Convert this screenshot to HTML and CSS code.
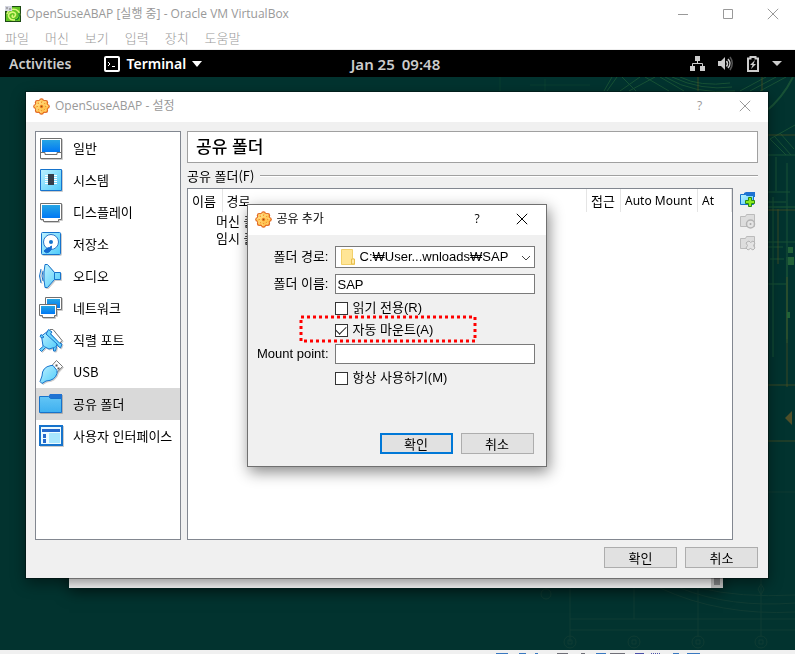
FILE: index.html
```html
<!DOCTYPE html>
<html lang="ko">
<head>
<meta charset="utf-8">
<title>OpenSuseABAP - Oracle VM VirtualBox</title>
<link rel="stylesheet" href="styles.css">
</head>
<body>
<svg width="0" height="0" class="defs" aria-hidden="true">
  <defs>
    <linearGradient id="screen" x1="0" y1="0" x2="0" y2="1"><stop offset="0" stop-color="#26a5e4"/><stop offset="1" stop-color="#0078f5"/></linearGradient>
    <linearGradient id="sky" x1="0" y1="0" x2="1" y2="1"><stop offset="0" stop-color="#bdf1ff"/><stop offset="1" stop-color="#4ecbfa"/></linearGradient>
    <linearGradient id="folder" x1="0" y1="0" x2="0" y2="1"><stop offset="0" stop-color="#63c5f5"/><stop offset="1" stop-color="#3eb0f0"/></linearGradient>
    <linearGradient id="orange" x1="0" y1="0" x2="1" y2="1"><stop offset="0" stop-color="#ffe896"/><stop offset="1" stop-color="#ffb02e"/></linearGradient>
    <symbol id="gear" viewBox="0 0 16 16">
      <g fill="#e2641c"><circle cx="8" cy="8" r="6.500"/><circle cx="8" cy="2.400" r="2.200"/><circle cx="12" cy="4" r="2.200"/><circle cx="13.600" cy="8" r="2.200"/><circle cx="12" cy="12" r="2.200"/><circle cx="8" cy="13.600" r="2.200"/><circle cx="4" cy="12" r="2.200"/><circle cx="2.400" cy="8" r="2.200"/><circle cx="4" cy="4" r="2.200"/></g>
      <g fill="url(#orange)"><circle cx="8" cy="8" r="5.800"/><circle cx="8" cy="2.600" r="1.300"/><circle cx="11.800" cy="4.200" r="1.300"/><circle cx="13.400" cy="8" r="1.300"/><circle cx="11.800" cy="11.800" r="1.300"/><circle cx="8" cy="13.400" r="1.300"/><circle cx="4.200" cy="11.800" r="1.300"/><circle cx="2.600" cy="8" r="1.300"/><circle cx="4.200" cy="4.200" r="1.300"/></g>
      <circle cx="8" cy="8" r="1.600" fill="#f0801c"/><circle cx="8" cy="8" r=".7" fill="#8a4a1c"/>
      <path d="M8 3.500v1M8 11.500v1M3.500 8h1M11.500 8h1M4.800 4.800l.6.600M10.600 10.600l.6.600M11.200 4.800l-.6.600M4.800 11.200l.6-.6" stroke="#ee8424"/>
    </symbol>
    <symbol id="close" viewBox="0 0 12 12"><path d="M.8.800 11.200 11.200M11.200.8.800 11.200" fill="none" stroke="currentColor"/></symbol>
  </defs>
</svg>

<header class="app-title">
  <svg width="16" height="16" viewBox="0 0 16 16" aria-hidden="true">
    <rect width="16" height="16" fill="#1d4a14"/>
    <path d="M5 1h10v14H1V8z" fill="#62c422"/>
    <path d="M2 8C3 3 10 2 13 5s1 9-4 9-7-5-4-7 7 0 5 3-4 0-2-1" fill="none" stroke="#d8f77a" stroke-width="1.600"/>
    <path d="M10 14c3 0 5-3 4-7" fill="none" stroke="#168a20" stroke-width="1.500"/>
    <rect width="7" height="5" fill="#d4d6e0"/><path d="M1 2h2M4 3h2" stroke="#777"/>
  </svg>
  <span>OpenSuseABAP [실행 중] - Oracle VM VirtualBox</span>
  <div class="window-controls">
    <button type="button" aria-label="최소화"><svg width="12" height="12" viewBox="0 0 12 12"><path d="M1 6.500h10" stroke="currentColor"/></svg></button>
    <button type="button" aria-label="최대화"><svg width="12" height="12" viewBox="0 0 12 12"><path d="M1.500 1.500h9v9h-9z" fill="none" stroke="currentColor"/></svg></button>
    <button type="button" aria-label="닫기"><svg width="12" height="12"><use href="#close"/></svg></button>
  </div>
</header>
<nav class="app-menu">
  <a href="#">파일</a><a href="#">머신</a><a href="#">보기</a><a href="#">입력</a><a href="#">장치</a><a href="#">도움말</a>
</nav>

<div class="shell-bar">
  <div class="shell-left">
    <span>Activities</span>
    <span class="shell-app">
      <svg width="16" height="16" viewBox="0 0 16 16" aria-hidden="true"><rect x="1" y="1" width="14" height="14" rx="1" fill="none" stroke="#fff" stroke-width="2"/><path d="M4 6l2 2-2 2M8 10.500h3" fill="none" stroke="#fff"/></svg>
      Terminal
      <svg width="10" height="6" viewBox="0 0 10 6" aria-hidden="true"><path d="M0 0h10L5 6z" fill="#fff"/></svg>
    </span>
  </div>
  <div class="shell-clock"><span>Jan 25</span><span>09:48</span></div>
  <div class="shell-right">
    <svg width="15" height="16" viewBox="0 0 15 16" fill="#ccc" aria-hidden="true"><path d="M5 0h5v5H5zM0 10h5v5H0zM10 10h5v5h-5z"/><path d="M7.500 5v3M2.500 10V7.500h10V10" fill="none" stroke="#ccc"/></svg>
    <svg width="16" height="16" viewBox="0 0 16 16" aria-hidden="true"><path d="M0 5h3l4-4v13l-4-4H0z" fill="#ccc"/><path d="M8.500 5q2 2.500 0 5.500M10 3q4 4.500 0 9" fill="none" stroke="#ccc" stroke-width="1.500"/><path d="M12 1q4.500 6 0 13" fill="none" stroke="#555" stroke-width="1.500"/></svg>
    <svg width="12" height="16" viewBox="0 0 12 16" aria-hidden="true"><path d="M1 2.500h2.500V1h5v1.500H11V15H1z" fill="none" stroke="#ccc" stroke-width="2"/><path d="M8 4 3 9h2.500L4 13l5-5H6.500z" fill="#ccc"/></svg>
    <svg width="10" height="6" viewBox="0 0 10 6" aria-hidden="true"><path d="M0 0h10L5 5z" fill="#ccc"/></svg>
  </div>
</div>

<main class="desktop">
  <svg class="wallpaper" viewBox="0 0 795 573" preserveAspectRatio="none" aria-hidden="true">
    <g fill="none" stroke="#2b6b3c" opacity=".55">
      <path d="M612 0l-8 14M617 0l-10 14M622 0l14 14M640 0l-20 14M645 0l24 14M655 0l-26 14M660 0l24 14M665 0q30 18 70 14M672 0q30 14 60 10M680 0q20 10 50 6M740 14l26-14M750 14l26-14M760 14l26-14"/>
      <path d="M530 8h60M545 2v12M500 0v14" opacity=".4"/>
      <path d="M765 35Q782 22 793 0" stroke-width="2"/>
      <path d="M770 62l25-14M770 62l16 16M775 60l16 18M780 56l14 16M768 78h27M776 80v34M768 115h22M768 125h18M787 86v180M768 165h27M768 170h15M770 182h14M773 120v160M768 207h18"/>
      <path d="M787 180v82M768 130h27" stroke-width="2" opacity=".6"/>
    </g>
    <g fill="none" stroke="#56531f" opacity=".65"><path d="M698 0v14M762 0v14M768 58h27M768 133h27M787 200v110M768 308h27M768 364h27M778 132v55"/></g>
    <path d="M788 170h5v6h-5zM788 180h6v8h-6zM787 235h3v6h-3z" fill="#226238"/>
    <path d="M785 341l7-7v14z" fill="#4f4f28"/>
    <g fill="none" stroke="#25493a" opacity=".4">
      <path d="M570 510v55M634 510v32M698 505v55M761 500v60M570 542h225M570 553h225M660 511q60 28 135 24M680 511q50 20 115 15M768 415h27M700 511q40 10 95 7"/>
      <circle cx="546" cy="517" r="5"/><circle cx="570" cy="565" r="6"/><circle cx="634" cy="565" r="6"/><circle cx="698" cy="565" r="6"/><circle cx="761" cy="565" r="6"/><path d="M568 563h4v4h-4zM632 563h4v4h-4zM696 563h4v4h-4zM759 563h4v4h-4zM758 512l3-5 3 5-3 6z"/>
    </g>
  </svg>
  <div class="terminal"><span class="scroll"></span></div>

  <section class="window settings" aria-label="OpenSuseABAP - 설정">
    <header class="title-bar inactive">
      <svg width="17" height="17" aria-hidden="true"><use href="#gear"/></svg>
      <h1>OpenSuseABAP - 설정</h1>
      <button type="button" aria-label="도움말">?</button>
      <button type="button" aria-label="닫기"><svg width="12" height="12"><use href="#close"/></svg></button>
    </header>
    <div class="settings-body">
      <nav class="categories">
        <a href="#"><svg viewBox="0 0 24 24"><path d="M1.500 2.500h21v20h-21z" fill="#fff" stroke="#707070"/><path d="M3 4h18v12H3z" fill="url(#screen)"/><path d="M2 16.500h4v2h12v-2h4" fill="none" stroke="#707070"/></svg>일반</a>
        <a href="#"><svg viewBox="0 0 24 24"><path d="M1.500 1.500h21v21h-21z" fill="url(#sky)" stroke="#1673cc"/><path d="M6 7.500h12M6 9.500h12M6 11.500h12M6 13.500h12M6 15.500h12" stroke="#fff"/><path d="M9 6h6v11H9z" fill="#343d49"/></svg>시스템</a>
        <a href="#"><svg viewBox="0 0 24 24"><path d="M1.500 3.500h21v16h-3v2h-15v-2h-3z" fill="#fff" stroke="#707070"/><path d="M3 5h18v13H3z" fill="url(#screen)"/></svg>디스플레이</a>
        <a href="#"><svg viewBox="0 0 24 24"><rect x="2.500" y=".5" width="19" height="22" rx="1" fill="url(#sky)" stroke="#1673cc"/><circle cx="12" cy="10" r="7.500" fill="#fff" stroke="#2b76c9"/><circle cx="12" cy="10" r="2" fill="#1673cc"/><path d="M12.500 14q-2 2-4 2L5 19q2 3 5 1 3-2 2.500-6" fill="#146bd0" stroke="#146bd0"/></svg>저장소</a>
        <a href="#"><svg viewBox="0 0 24 24"><path d="M6 .5h2.500l7 8h6v7h-6l-7 8H6L5 16V8z" fill="url(#sky)" stroke="#1673cc"/><path d="M15.500 8.500v7" stroke="#1673cc"/><path d="M4 7q-2 5 0 10M2 5q-3 7 0 14" fill="none" stroke="#1673cc"/></svg>오디오</a>
        <a href="#"><svg viewBox="0 0 24 24"><path d="M6.500 1.500h16v12h-16z" fill="#fff" stroke="#707070"/><path d="M8 3h13v9H8z" fill="url(#screen)"/><path d="M.5 8.500h17v11h-2v2h-12v-2h-3z" fill="#fff" stroke="#707070"/><path d="M2 10h14v8H2z" fill="url(#screen)"/></svg>네트워크</a>
        <a href="#"><svg viewBox="0 0 24 24"><path d="M11 1.500h3l9 11-3 4L9 4z" fill="#fff" stroke="#777"/><path d="M2.500 8 9 3l10 11-2 5-7 2-6-3z" fill="url(#sky)" stroke="#1673cc"/><path d="M9.500 1.500 13 4l-1.500 2 9 9 2.500 1-1.500 4-2.500-2-1-2-11-10z" fill="#6cd4fb" stroke="#1673cc"/><path d="M1 8.500l2 1.500 2-1-3-2.500zM4.500 18 .5 21.500l2 2 4-4M14.500 20v3h2l1-4" fill="#6cd4fb" stroke="#1673cc"/></svg>직렬 포트</a>
        <a href="#"><svg viewBox="0 0 24 24"><path d="M12 6.500 17.500.5l6 6-6 6.500z" fill="#fff" stroke="#777"/><path d="M16.500 4.500h2v2h-2zM18.500 7.500h2v2h-2z" fill="#555"/><path d="M3 16q0-9 9-10.500h2l4 5v3q-2 7-11 7.500L3 23.500l-2-2z" fill="url(#sky)" stroke="#1673cc"/></svg>USB</a>
        <a href="#" class="selected" aria-current="page"><svg viewBox="0 0 24 24"><path d="M9 5l2-3h12v6H9z" fill="#1f72d2"/><path d="M.5 4.500h9l2 2h11v14H.5z" fill="url(#folder)" stroke="#1673cc"/></svg>공유 폴더</a>
        <a href="#"><svg viewBox="0 0 24 24"><path d="M1 2h22v19H1z" fill="#edfbff" stroke="#1673cc" stroke-width="2"/><path d="M3 5h18v3H3zM4 10h3v4H4zM4 15h3v4H4z" fill="#2468cc"/><path d="M10 9h11v10H10z" fill="#a9e6fd"/></svg>사용자 인터페이스</a>
      </nav>
      <div class="page">
        <h2>공유 폴더</h2>
        <div class="group-title"><span>공유 폴더(F)</span></div>
        <div class="folders">
          <div class="table-box">
            <table>
              <colgroup><col class="c-name"><col><col class="c-access"><col class="c-auto"><col class="c-at"></colgroup>
              <thead><tr><th>이름</th><th>경로</th><th>접근</th><th>Auto Mount</th><th>At</th></tr></thead>
              <tbody><tr><td colspan="5">머신 폴더</td></tr><tr><td colspan="5">임시 폴더</td></tr></tbody>
            </table>
          </div>
          <div class="tools">
            <button type="button" aria-label="추가"><svg viewBox="0 0 17 17"><path d="M5 2l2-1h9v5H5z" fill="#1f72d2"/><path d="M1.500 3.500h5l1 1h7v9h-13z" fill="url(#sky)" stroke="#1673cc"/><path d="M9.500 6.500h3v3h3v3h-3v3h-3v-3h-3v-3h3z" fill="#8bea1e" stroke="#2c8a12"/></svg></button>
            <button type="button" aria-label="편집" disabled><svg viewBox="0 0 17 17"><path d="M1.500 3.500h5l1-2h8v12h-14z" fill="#ddd" stroke="#bbb"/><circle cx="11.500" cy="11" r="4" fill="#e4e4e4" stroke="#b4b4b4" stroke-width="1.500"/><circle cx="11.500" cy="11" r="1" fill="#aaa"/></svg></button>
            <button type="button" aria-label="제거" disabled><svg viewBox="0 0 17 17"><path d="M1.500 3.500h5l1-2h8v12h-14z" fill="#ddd" stroke="#bbb"/><path d="M8 7l2-1 1.500 1.500L14 6l2 2-1.500 2.500L16 13l-2 2-2.500-1.500L9 15l-2-2 1.500-2.500L7 8z" fill="#e4e4e4" stroke="#b4b4b4"/></svg></button>
          </div>
        </div>
      </div>
    </div>
    <footer class="actions"><button type="button">확인</button><button type="button">취소</button></footer>
  </section>

  <section class="window add-share" role="dialog" aria-label="공유 추가">
    <header class="title-bar">
      <svg width="17" height="17" aria-hidden="true"><use href="#gear"/></svg>
      <h1>공유 추가</h1>
      <button type="button" aria-label="도움말">?</button>
      <button type="button" aria-label="닫기"><svg width="12" height="12"><use href="#close"/></svg></button>
    </header>
    <form>
      <label class="field" for="path">폴더 경로:</label>
      <div class="combo">
        <select id="path"><option>C:₩User...wnloads₩SAP</option></select>
        <svg class="combo-folder" width="14" height="16" viewBox="0 0 14 16" aria-hidden="true"><path d="M.5.500h11v9l2 1v5H.5z" fill="#ffe596" stroke="#f2d06b"/><path d="M10.500 15v-5h3v5z" fill="#ffe9a8" stroke="#e8bf4d"/></svg>
        <svg class="combo-arrow" width="10" height="6" viewBox="0 0 10 6" aria-hidden="true"><path d="M1 1l4 4 4-4" fill="none" stroke="#444"/></svg>
      </div>
      <label class="field" for="name">폴더 이름:</label>
      <input type="text" id="name" value="SAP">
      <label class="check"><input type="checkbox">읽기 전용(R)</label>
      <label class="check marked"><input type="checkbox" checked>자동 마운트(A)
        <svg class="marker" aria-hidden="true"><rect x="2" y="2" width="174" height="24" fill="none" stroke="red" stroke-width="3" stroke-dasharray="3 3"/></svg>
      </label>
      <label class="field" for="mount">Mount point:</label>
      <input type="text" id="mount">
      <label class="check"><input type="checkbox">항상 사용하기(M)</label>
    </form>
    <footer class="actions"><button type="button" class="default">확인</button><button type="button">취소</button></footer>
  </section>
</main>
<footer class="status-bar">
  <svg width="210" height="1" viewBox="0 0 210 1" aria-hidden="true"><path d="M1 .5h12M24 .5h7M40 .5h3M101 .5h10M178 .5h6M192 .5h13" stroke="#3978c0"/><path d="M62 .5h11M86 .5h4M115 .5h15" stroke="#707078"/><path d="M140 .5h9" stroke="#4a50a8"/><path d="M156 .5h10" stroke="#4a50a8" stroke-dasharray="1 1"/></svg>
</footer>
</body>
</html>
```
FILE: styles.css
```css
*, ::before, ::after { box-sizing: border-box; }
html, body { height: 100%; }
body {
  margin: 0;
  display: flex;
  flex-direction: column;
  overflow: hidden;
  background: #fff;
  color: #000;
  font: 13px/16px "Noto Sans CJK KR", sans-serif;
}
svg { flex: none; display: block; }
.defs { position: absolute; }
h1, h2 { margin: 0; font-weight: 400; }
a { color: inherit; text-decoration: none; }
button, input, select { font: inherit; color: inherit; margin: 0; padding: 0; }

.app-title {
  display: flex;
  align-items: center;
  gap: 5px;
  height: 27px;
  padding-left: 5px;
  color: #999;
  font-family: "Open Sans", "Noto Sans CJK KR", sans-serif;
  font-size: 12px;
}
.window-controls { display: flex; margin-left: auto; }
.window-controls button {
  width: 45px;
  display: grid;
  place-items: center;
  border: 0;
  background: none;
}
.app-menu {
  display: flex;
  align-items: center;
  gap: 16px;
  height: 23px;
  padding-left: 5px;
  color: #999;
  font-weight: 300;
  border-bottom: 1px solid #eee;
}

.shell-bar {
  display: grid;
  grid-template-columns: 1fr auto 1fr;
  align-items: center;
  height: 27px;
  padding: 0 13px 0 9px;
  background: #000;
  color: #ccc;
  font: 600 14px/20px "Noto Sans", sans-serif;
}
.shell-left { display: flex; gap: 33px; }
.shell-app { display: flex; align-items: center; gap: 6px; color: #fff; }
.shell-clock { display: flex; gap: 7px; font-size: 15px; }
.shell-right { display: flex; align-items: center; justify-content: flex-end; gap: 13px; }

.desktop { position: relative; flex: 1; background: #02332f; overflow: hidden; }
.wallpaper { position: absolute; width: 100%; height: 100%; }
.status-bar { height: 4px; display: flex; align-items: flex-end; background: #f0f0f0; padding-left: 495px; }

.terminal {
  position: absolute;
  left: 69px;
  right: 72px;
  top: 60px;
  bottom: 62px;
  display: flex;
  align-items: flex-end;
  justify-content: flex-end;
  background: #fff;
  box-shadow: 0 4px 14px #0008;
}
.scroll {
  width: 12px;
  height: 12px;
  background: #888a8c;
  border: solid #ccc;
  border-width: 0 3px 3px;
}

.window { position: absolute; display: flex; flex-direction: column; background: #f0f0f0; }
.settings { left: 26px; right: 27px; top: 15px; bottom: 72px; box-shadow: 0 0 0 1px #0005, 0 5px 14px #0007; }
.add-share {
  left: calc(50% - 151px);
  top: 127px;
  width: 300px;
  height: 263px;
  border: 1px solid #707070;
  box-shadow: 2px 5px 14px #0007;
}
.title-bar {
  display: flex;
  align-items: center;
  height: 30px;
  padding: 0 1px 2px 7px;
  background: #fff;
  font: 12px/16px "Open Sans", "Noto Sans CJK KR", sans-serif;
}
.inactive { color: #999; }
.title-bar h1 { flex: 1; padding-left: 5px; font: inherit; }
.title-bar button { width: 45px; display: grid; place-items: center; border: 0; background: none; }

.settings-body { flex: 1; display: flex; gap: 6px; min-height: 0; padding: 9px 10px 7px 9px; }
.categories { width: 146px; border: 1px solid #828790; background: #fff; }
.categories a { display: flex; align-items: center; gap: 10px; height: 32px; padding-left: 3px; white-space: nowrap; }
.categories svg { width: 24px; height: 24px; filter: drop-shadow(1px 1px 0 #0003); }
.categories .selected { background: #d9d9d9; }
.page { flex: 1; display: flex; flex-direction: column; min-width: 0; }
.page h2 { height: 32px; padding-left: 8px; border: 1px solid #a0a0a0; background: #fff; font-size: 17px; font-weight: 500; line-height: 28px; }
.group-title { display: flex; align-items: center; gap: 6px; height: 25px; }
.group-title::after { content: ""; flex: 1; height: 2px; background: #a0a0a0; border-bottom: 1px solid #fff; }
.folders { flex: 1; display: flex; gap: 6px; }
.table-box { flex: 1; border: 1px solid #828790; background: #fff; }
table { width: 100%; border-collapse: collapse; table-layout: fixed; }
th, td { padding: 0 0 0 4px; text-align: left; font-weight: 400; white-space: nowrap; }
th { height: 23px; border-right: 1px solid #e5e5e5; font-family: "Noto Sans", "Noto Sans CJK KR", sans-serif; font-size: 12px; }
td { height: 17px; line-height: 17px; padding-left: 28px; }
th:nth-child(-n+3) { font-size: 13px; }
.c-name, .c-access, .c-at { width: 34px; }
.c-auto { width: 77px; }
.tools { width: 19px; display: flex; flex-direction: column; gap: 5px; padding-top: 3px; }
.tools button { border: 0; background: none; }
.tools svg { width: 17px; height: 17px; }

.actions { display: flex; justify-content: flex-end; gap: 8px; padding: 0 10px 10px; }
.add-share .actions { padding: 0 12px 12px; }
.actions button { width: 73px; height: 21px; line-height: 17px; border: 1px solid #adadad; background: #e1e1e1; }
.actions .default { border: 2px solid #0078d7; }

form {
  flex: 1;
  display: grid;
  grid-template-columns: 70px 1fr;
  align-content: start;
  gap: 6px;
  padding: 11px 11px 0;
  font-family: "Liberation Sans", "Noto Sans CJK KR", sans-serif;
}
.field { align-self: center; justify-self: end; white-space: nowrap; }
.combo { position: relative; }
form select, form input[type="text"] {
  display: block;
  width: 100%;
  height: 20px;
  border: 1px solid #7a7a7a;
  border-radius: 0;
  background: #fff;
  padding-left: 2px;
  appearance: none;
}
form select { height: 22px; padding-left: 24px; }
.combo-folder { position: absolute; left: 6px; top: 3px; }
.combo-arrow { position: absolute; right: 4px; top: 9px; }
.check { grid-column: 2; justify-self: start; display: flex; align-items: center; gap: 5px; height: 16px; white-space: nowrap; }
.check input { appearance: none; width: 13px; height: 13px; border: 1px solid #333; background: #fff; display: grid; place-items: center; }
.check input:checked::before { content: ""; width: 10px; height: 6px; margin-top: -3px; border: solid #222; border-width: 0 0 1px 1px; rotate: -45deg; }
.marked { position: relative; }
.marker { position: absolute; left: -36px; top: -7px; width: 178px; height: 28px; pointer-events: none; }
```
